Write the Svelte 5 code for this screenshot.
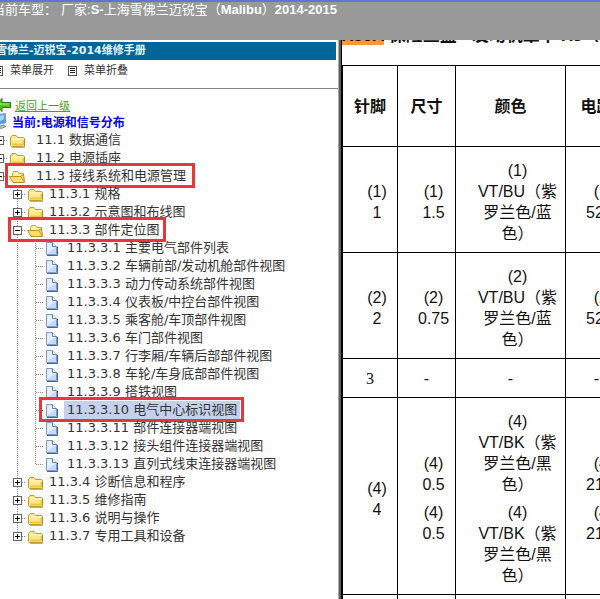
<script>
	let tree = $state([
		{ title: '11.1 数据通信', children: [] },
		{ title: '11.2 电源插座', children: [] },
		{
			title: '11.3 接线系统和电源管理',
			open: true,
			marked: true,
			children: [
				{ title: '11.3.1 规格', children: [] },
				{ title: '11.3.2 示意图和布线图', children: [] },
				{
					title: '11.3.3 部件定位图',
					open: true,
					marked: true,
					children: [
						{ title: '11.3.3.1 主要电气部件列表' },
						{ title: '11.3.3.2 车辆前部/发动机舱部件视图' },
						{ title: '11.3.3.3 动力传动系统部件视图' },
						{ title: '11.3.3.4 仪表板/中控台部件视图' },
						{ title: '11.3.3.5 乘客舱/车顶部件视图' },
						{ title: '11.3.3.6 车门部件视图' },
						{ title: '11.3.3.7 行李厢/车辆后部部件视图' },
						{ title: '11.3.3.8 车轮/车身底部部件视图' },
						{ title: '11.3.3.9 搭铁视图' },
						{ title: '11.3.3.10 电气中心标识视图', selected: true, marked: true },
						{ title: '11.3.3.11 部件连接器端视图' },
						{ title: '11.3.3.12 接头组件连接器端视图' },
						{ title: '11.3.3.13 直列式线束连接器端视图' }
					]
				},
				{ title: '11.3.4 诊断信息和程序', children: [] },
				{ title: '11.3.5 维修指南', children: [] },
				{ title: '11.3.6 说明与操作', children: [] },
				{ title: '11.3.7 专用工具和设备', children: [] }
			]
		}
	]);

	const vtbk = ['(4)', 'VT/BK（紫罗兰色/黑色）'];

	// every cell is a list of wires, every wire is a list of lines
	const pins = [
		[[['(1)', '1']], [['(1)', '1.5']], [['(1)', 'VT/BU（紫罗兰色/蓝色）']], [['(1)', '5290']]],
		[[['(2)', '2']], [['(2)', '0.75']], [['(2)', 'VT/BU（紫罗兰色/蓝色）']], [['(2)', '5290']]],
		['3', '-', '-', '-'],
		[
			[['(4)', '4']],
			[['(4)', '0.5'], ['(4)', '0.5']],
			[vtbk, vtbk],
			[['(4)', '2140'], ['(4)', '2140']]
		],
		['5', '-', '-', '-']
	];

	function setAll(nodes, open) {
		for (const node of nodes) {
			if (node.children?.length) {
				node.open = open;
				setAll(node.children, open);
			}
		}
	}
</script>

{#snippet listIcon()}
	<svg width="9" height="10" viewBox="0 0 9 10" shape-rendering="crispEdges">
		<rect x="0.5" y="0.5" width="8" height="9" fill="#fff" stroke="#555" />
		<path d="M2 2.5h5M2 4.5h5M2 6.5h5" stroke="#222" />
	</svg>
{/snippet}

{#snippet branch(nodes, depth)}
	<ul>
		{#each nodes as node, i}
			<li>
				<div class="row" class:marked={node.marked} class:root={depth === 0} class:leaf={depth === 2}>
					{#if depth === 2}
						<svg width="18" height="18">
							<path class="dots" d="M9.5 0V18" />
						</svg>
					{/if}
					{#if node.children}
						<button class="toggle" aria-label={node.title} onclick={() => (node.open = !node.open)}>
							<svg width="18" height="18" shape-rendering="crispEdges">
								<path class="dots" d={i === nodes.length - 1 && depth > 0 ? 'M9.5 0V9' : 'M9.5 0V18'} />
								<path class="dots" d="M14 9.5H18" />
								<rect x="5.5" y="5.5" width="8" height="8" fill="#fff" stroke="#666" />
								<path
									d={node.open || depth === 0 ? 'M7 9.5h5' : 'M7 9.5h5M9.5 7v5'}
									stroke="#000"
								/>
							</svg>
						</button>
						<svg width="18" height="18">
							{#if node.open}
								<path d="M4.5 14.5V6.500l1-2h4l1.500 2h4.500v3" fill="#fff3a8" stroke="#c9a02c" />
								<path d="M1.500 9.500h11.500l3.500 6H5z" fill="#ffe066" stroke="#c08f1c" stroke-linejoin="round" />
								<path d="M13 9l2.500-1.500 1 7" fill="#f6cf4a" stroke="#c08f1c" />
							{:else}
								<path d="M2.500 14.500v-8l1.500-2h4l1.500 2h6l1 1v7l-1 1h-12z" fill="#ffe98c" stroke="#c69a2c" stroke-linejoin="round" />
								<path d="M3.500 8h12" stroke="#fffbd6" />
								<path d="M4 13.500h11.500V9" fill="none" stroke="#f2c53d" stroke-width="2" />
								<path d="M4 16.500h12.500V8" fill="none" stroke="#8a7440" opacity="0.6" />
							{/if}
						</svg>
					{:else}
						<svg width="18" height="18">
							<path class="dots" d={i === nodes.length - 1 ? 'M9.5 0V10' : 'M9.5 0V18'} />
							<path class="dots" d="M10 9.5H18" />
						</svg>
						<svg width="18" height="18">
							<path d="M2.500 3.500h6l4 4v8h-10z" fill="#e3efff" stroke="#7f9cc9" />
							<path d="M4 14l8-6v7H4z" fill="#c3daf9" />
							<path d="M8.500 3.500v4h4" fill="#fff" stroke="#5f7fb5" />
							<path d="M3 16.500h10.500V8" fill="none" stroke="#456196" />
						</svg>
					{/if}
					<a href="#section" class:selected={node.selected}>{node.title}</a>
				</div>
				{#if node.open}
					{@render branch(node.children, depth + 1)}
				{/if}
			</li>
		{/each}
	</ul>
{/snippet}

<div class="page">
	<header>
		<p>当前车型：<span>厂家:<b>S-</b>上海雪佛兰迈锐宝（<b>Malibu</b>）<b>2014-2015</b></span></p>
	</header>

	<div class="frames">
		<aside>
			<h1>雪佛兰-迈锐宝-2014维修手册</h1>
			<div class="tools">
				<button onclick={() => setAll(tree, true)}>{@render listIcon()}菜单展开</button>
				<button onclick={() => setAll(tree, false)}>{@render listIcon()}菜单折叠</button>
			</div>

			<div class="back">
				<svg width="12" height="14" viewBox="0 0 12 14">
					<path d="M-4 7L2 0.500V4.500H10.500V9.500H2V13.500z" fill="#58c322" stroke="#1d7a10" />
					<path d="M-1 6H9" stroke="#b4ef7c" />
				</svg>
				<a href="#up">返回上一级</a>
			</div>
			<div class="current">
				<svg width="7" height="16" viewBox="0 0 7 16">
					<path d="M-3 1.500L5.500 0.500V10L-3 11.500z" fill="#4d9bea" stroke="#8ba3c4" />
					<path d="M-1 3L4 2v4l-5 3z" fill="#a5d4ff" />
					<path d="M-2 13.500L4 12l2 1.500-5 2z" fill="#b9c6d8" stroke="#74869f" />
				</svg>
				<strong>当前:电源和信号分布</strong>
			</div>

			<nav>
				{@render branch(tree, 0)}
			</nav>
		</aside>

		<div class="splitter"></div>

		<main>
			<h2><mark>X50A</mark> 保险丝盒 - 发动机罩下 X3（GAS）</h2>
			<table>
				<thead>
					<tr>
						<th class="pin">针脚</th>
						<th class="size">尺寸</th>
						<th class="color">颜色</th>
						<th class="circuit">电路</th>
					</tr>
				</thead>
				<tbody>
					{#each pins as pin}
						<tr>
							{#each pin as cell, i}
								{#if typeof cell === 'string'}
									<td class:serif={i === 0}>{cell}</td>
								{:else}
									<td class="wires">
										{#each cell as wire}
											<div class="wire">
												{#each wire as line}
													<p>{line}</p>
												{/each}
											</div>
										{/each}
									</td>
								{/if}
							{/each}
						</tr>
					{/each}
				</tbody>
			</table>
		</main>
	</div>
</div>

<style>
	:global(body) {
		margin: 0;
		background: #fff;
	}
	.page {
		display: flex;
		flex-direction: column;
		height: 100vh;
		overflow: hidden;
		font-family: 'DejaVu Sans', 'Noto Sans CJK SC', sans-serif;
	}
	p,
	h1,
	h2,
	ul {
		margin: 0;
		padding: 0;
	}
	svg {
		display: block;
		flex: none;
	}
	button {
		padding: 0;
		border: 0;
		background: none;
		font: inherit;
		color: inherit;
		cursor: pointer;
	}

	header {
		box-sizing: border-box;
		flex: none;
		height: 40px;
		border-top: 2px solid #5b76d3;
		background: #999;
		color: #fff;
		overflow: hidden;
	}
	header p {
		margin-left: -8px;
		font-family: 'Liberation Sans', 'Noto Sans CJK SC', sans-serif;
		font-size: 13px;
		line-height: 16px;
		white-space: nowrap;
	}
	header span {
		margin-left: 4px;
	}

	.frames {
		display: flex;
		flex: 1;
		min-height: 0;
	}
	aside {
		flex: 0 0 338px;
		overflow: hidden;
		color: #333;
	}
	h1 {
		margin: 2px 2px 0 0;
		background: #069;
		color: #e6f4fb;
		font-size: 11px;
		line-height: 18px;
		text-indent: -4px;
		white-space: nowrap;
	}
	.tools {
		display: flex;
		gap: 14px;
		height: 28px;
		margin-left: -6px;
		border-bottom: 1px solid #888;
		font-size: 11px;
		line-height: 22px;
	}
	.tools button {
		display: flex;
		align-items: center;
		gap: 7px;
		height: 22px;
	}
	.back,
	.current {
		display: flex;
		align-items: center;
		height: 16px;
	}
	.back {
		gap: 3px;
		margin-top: 8px;
		font-size: 11px;
	}
	.back a {
		color: #4c9a2a;
	}
	.current {
		gap: 5px;
		margin-bottom: 2px;
		color: #00f;
		font-size: 12px;
	}

	nav {
		margin-left: -10px;
		font-size: 13px;
	}
	ul {
		list-style: none;
	}
	ul ul {
		padding-left: 18px;
	}
	ul ul ul {
		padding-left: 0;
	}
	.row {
		position: relative;
		display: flex;
		width: max-content;
		height: 18px;
		line-height: 18px;
	}
	.row a {
		margin-left: 2px;
		padding: 0 3px;
		color: #333;
		text-decoration: none;
		white-space: nowrap;
	}
	.root a {
		margin-left: 7px;
	}
	.row a.selected {
		background: #c3d1ec;
	}
	.marked::after {
		content: '';
		position: absolute;
		inset: -4px -4px -3px 0;
		border: 3px solid #e8373b;
		pointer-events: none;
	}
	.root.marked::after {
		left: 15px;
		right: -6px;
	}
	.leaf.marked::after {
		left: 31px;
	}
	.dots {
		fill: none;
		stroke: #888;
		stroke-dasharray: 1 1;
	}

	.splitter {
		flex: 0 0 4px;
		background: linear-gradient(to right, #aaa 1px, #5c5c5c 1px, #5c5c5c 3px, #000 3px);
	}

	main {
		flex: 1;
		min-width: 0;
		overflow: hidden;
		color: #111;
		font-family: 'Liberation Sans', 'Noto Sans CJK SC', sans-serif;
		font-size: 16px;
		line-height: 21px;
	}
	h2 {
		margin-top: -13px;
		height: 38px;
		font-size: 17px;
		line-height: 18px;
		white-space: nowrap;
	}
	mark {
		background: #f93;
		color: inherit;
	}
	table {
		width: 286px;
		table-layout: fixed;
		border-collapse: collapse;
	}
	th,
	td {
		padding: 9px 9px 8px;
		border: 1px solid #000;
		text-align: center;
	}
	th {
		padding: 30px 4px 29px;
	}
	.pin {
		width: 46px;
	}
	.size {
		width: 49px;
	}
	.color {
		width: 101px;
	}
	.wires {
		padding: 13px 6px 8px 20px;
	}
	.wire + .wire {
		margin-top: 7px;
	}
	.serif {
		font-family: 'Liberation Serif', serif;
	}
</style>
